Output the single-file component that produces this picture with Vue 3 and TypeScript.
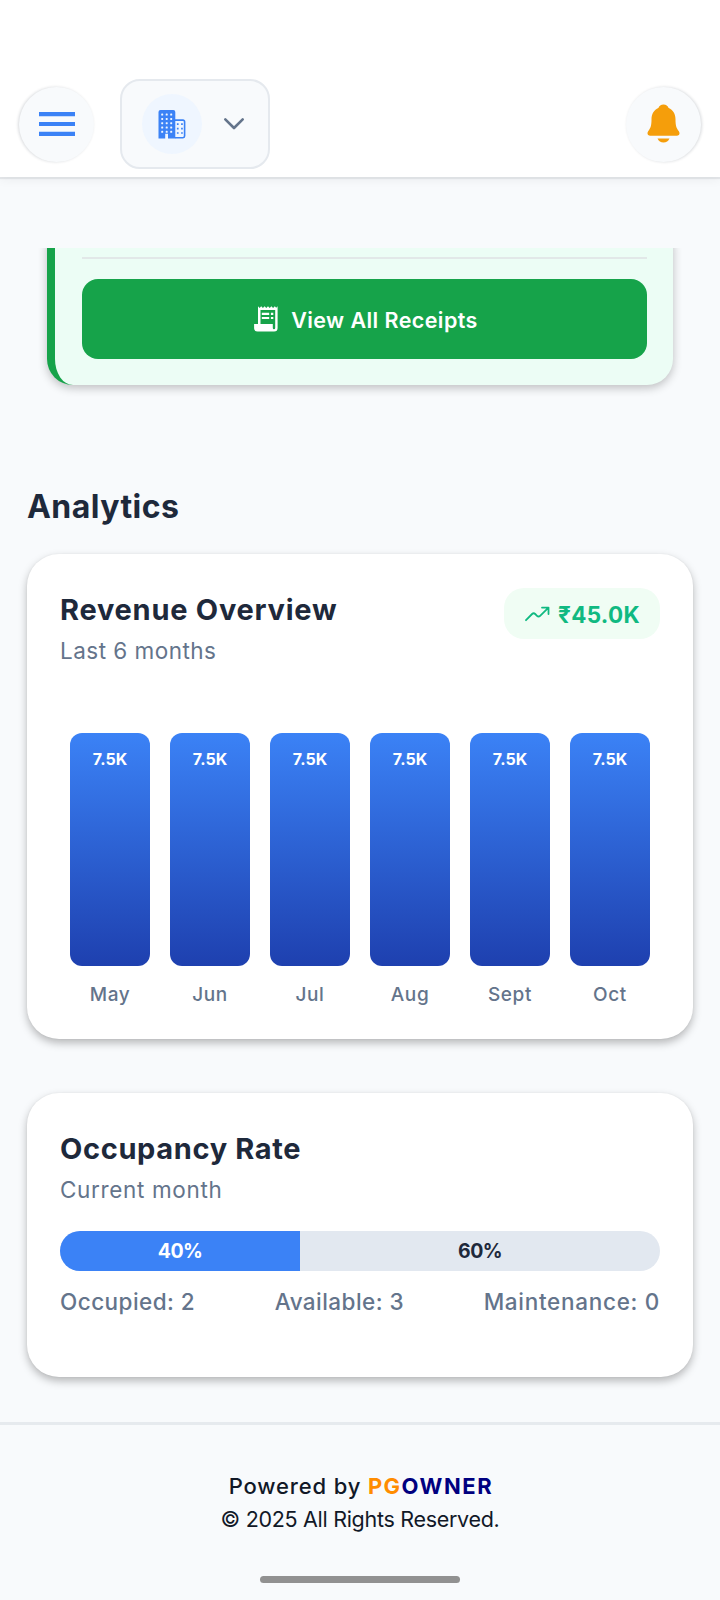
<script setup lang="ts">
interface Bar {
  month: string
  value: string
  amount: number
}

const bars: Bar[] = ['May', 'Jun', 'Jul', 'Aug', 'Sept', 'Oct'].map((month) => ({
  month,
  value: '7.5K',
  amount: 7500,
}))
const maxAmount = Math.max(...bars.map((b) => b.amount))
const barHeight = (b: Bar) => ({ height: `${(b.amount / maxAmount) * 100}%` })

const occupied = 40
const windows: [number, number][] = [0, 1, 2, 3, 4].flatMap((row) =>
  [0, 1, 2].map((col) => [col, row] as [number, number]),
)
</script>

<template>
  <div class="screen">
    <header class="topbar">
      <button class="round menu" aria-label="Menu">
        <svg width="36" height="25" viewBox="0 0 36 25" fill="#3b82f6">
          <path d="M0 0h36v4.2H0zM0 9.9h36v4.2H0zM0 19.8h36v4.2H0z" />
        </svg>
      </button>
      <button class="selector" aria-label="Select property">
        <span class="selector-icon">
          <svg width="28" height="29" viewBox="0 0 28 29">
            <path fill="#3b82f6" d="M2.5 0h12.8a2 2 0 0 1 2 2v26.500H10v-4.800H7.200v4.800H.5V2a2 2 0 0 1 2-2z" />
            <path fill="none" stroke="#3b82f6" stroke-width="1.6" d="M17 10.100h8a1.600 1.600 0 0 1 1.600 1.600v14.400a1.600 1.600 0 0 1-1.600 1.600H17" />
            <g fill="#eff6ff">
              <rect v-for="[c, r] in windows" :key="`${c}-${r}`" :x="3.2 + c * 4.5" :y="3.600 + r * 4.300" width="2" height="2" rx=".6" />
            </g>
            <path stroke="#3b82f6" stroke-width="1.700" stroke-dasharray="1.700 2.500" fill="none" d="M18.900 14.200H26.500M18.900 18.600H26.500M18.900 23H26.500" />
          </svg>
        </span>
        <svg width="22" height="14" viewBox="0 0 22 14" fill="none" stroke="#64748b" stroke-width="2.600" stroke-linecap="round" stroke-linejoin="round">
          <path d="M2.300 2.300 11 11l8.700-8.700" />
        </svg>
      </button>
      <button class="round bell" aria-label="Notifications">
        <svg width="33" height="39" viewBox="0 0 33 39" fill="#f59e0b">
          <path d="M16.500.4c2.600 0 4.300 1.400 5.100 3.500 4.300 1.900 6.900 5.900 6.900 11.300 0 6.400.9 8.700 3.200 11.800 1.700 2.300.6 4.800-1.900 4.800H3.200c-2.500 0-3.600-2.500-1.900-4.800 2.300-3.100 3.200-5.400 3.200-11.800 0-5.400 2.600-9.400 6.900-11.300.8-2.100 2.500-3.500 5.100-3.500z" />
          <path d="M10.500 34.400h12c-1.100 2.600-3.200 4-6 4s-4.900-1.400-6-4z" />
        </svg>
      </button>
    </header>

    <main class="content">
      <section class="receipts">
        <div class="receipts-card">
          <hr class="divider" />
          <button class="receipts-btn">
            <svg width="24" height="26" viewBox="0 0 24 26">
              <path fill="#fff" d="M4 .2 5.600 1.900 7.200.2l1.700 1.700L10.600.2l1.700 1.700L14 .2l1.700 1.700L17.400.2l1.700 1.700L20.800.2l1.400 1.500L23.600.2V22a3.500 3.500 0 0 1-3.500 3.500H3.500A3.400 3.400 0 0 1 .1 22v-3.900H4z" />
              <path fill="#16a34a" d="M6.500 4h14.700v18a1.200 1.200 0 0 1-2.400 0v-3.900H6.500z" />
              <path fill="#fff" d="M7.800 6.800h7.400v2.200H7.800zM16.900 6.800h2.400v2.200h-2.400zM7.800 10.900h7.400v2.200H7.800zM16.900 10.900h2.400v2.200h-2.400z" />
            </svg>
            <span>View All Receipts</span>
          </button>
        </div>
      </section>

      <h1 class="section-title">Analytics</h1>

      <section class="card revenue">
        <div class="card-head">
          <div>
            <h2>Revenue Overview</h2>
            <p class="subtitle last">Last 6 months</p>
          </div>
          <div class="badge">
            <svg width="25" height="16" viewBox="0 0 25 16" fill="none" stroke="#10b981" stroke-width="1.800" stroke-linecap="round" stroke-linejoin="round">
              <path d="M1 14.200 7.100 8a2.200 2.200 0 0 1 3.100 0l1.800 1.800a2.200 2.200 0 0 0 3.100 0L23.500 1.600M17 1.600h6.500v6.500" />
            </svg>
            <span>₹45.0K</span>
          </div>
        </div>
        <div class="chart">
          <div v-for="b in bars" :key="b.month" class="col">
            <div class="track">
              <div class="bar" :style="barHeight(b)">{{ b.value }}</div>
            </div>
            <span class="month">{{ b.month }}</span>
          </div>
        </div>
      </section>

      <section class="card occupancy">
        <h2 class="occ-title">Occupancy Rate</h2>
        <p class="subtitle current">Current month</p>
        <div class="meter">
          <div class="fill" :style="{ width: `${occupied}%` }">{{ occupied }}%</div>
          <div class="rest">{{ 100 - occupied }}%</div>
        </div>
        <div class="stats">
          <span>Occupied: 2</span>
          <span>Available: 3</span>
          <span class="maint">Maintenance: 0</span>
        </div>
      </section>
    </main>

    <footer class="footer">
      <p class="powered">Powered by <b class="pg">PG</b><b class="owner">OWNER</b></p>
      <p class="rights">© 2025 All Rights Reserved.</p>
      <div class="home-indicator"></div>
    </footer>
  </div>
</template>

<style>
body {
  margin: 0;
  background: #f8fafc;
}
</style>

<style scoped>
.screen {
  width: 720px;
  height: 1600px;
  overflow: hidden;
  display: flex;
  flex-direction: column;
  background: #f8fafc;
  color: #1e293b;
  font-family: Inter, 'Open Sans', sans-serif;
}
h1, h2, p { margin: 0; }
button {
  margin: 0;
  padding: 0;
  border: 0;
  font: inherit;
  display: flex;
  align-items: center;
  justify-content: center;
}
svg { display: block; flex: none; }

.topbar {
  box-sizing: border-box;
  flex: none;
  height: 177px;
  padding: 79px 19px 0;
  display: flex;
  align-items: flex-start;
  background: #fff;
  box-shadow: 0 2px 1px rgba(15, 23, 42, 0.08), 0 3px 10px rgba(15, 23, 42, 0.05);
}
.round {
  width: 75px;
  height: 75px;
  margin-top: 8px;
  border-radius: 50%;
  background: #f8fafc;
}
.menu { box-shadow: -1px 0 3px rgba(15, 23, 42, 0.16); }
.bell {
  margin-left: auto;
  box-shadow: 1px 0 3px rgba(15, 23, 42, 0.16);
}
.bell svg { margin: 0 1px 2px 0; }
.selector {
  box-sizing: border-box;
  width: 150px;
  height: 90px;
  margin-left: 26px;
  padding-right: 4px;
  gap: 21px;
  border: 2px solid #e5e9ee;
  border-radius: 20px;
  background: #f8fafc;
}
.selector-icon {
  width: 60px;
  height: 60px;
  border-radius: 50%;
  display: flex;
  align-items: center;
  justify-content: center;
  background: #eff6ff;
}

.content {
  flex: none;
  height: 1245px;
  padding: 71px 27px 0;
  box-sizing: border-box;
}
.receipts {
  height: 160px;
  margin: 0 -27px;
  padding: 0 47px;
  overflow: hidden;
}
.receipts-card {
  box-sizing: border-box;
  height: 166px;
  margin-top: -29px;
  padding: 38px 26px 0 27px;
  border-left: 8px solid #16a34a;
  border-radius: 26px;
  background: #ecfdf5;
  box-shadow: 0 3px 10px rgba(0, 0, 0, 0.24);
}
.divider {
  margin: 0;
  border: 0;
  height: 2px;
  background: #e2e8e8;
}
.receipts-btn {
  width: 100%;
  height: 80px;
  margin-top: 20px;
  gap: 13px;
  border-radius: 16px;
  background: #16a34a;
  color: #fff;
  font-size: 21.500px;
  font-weight: 600;
  letter-spacing: 0.43px;
}
.receipts-btn svg { margin: 0 0 1px 3px; }
.receipts-btn span { padding-top: 2px; }
.section-title {
  margin-top: 79px;
  font-size: 32px;
  font-weight: 700;
  line-height: 40px;
  letter-spacing: 0.45px;
}

.card {
  box-sizing: border-box;
  border-radius: 32px;
  background: #fff;
  box-shadow: 0 4px 8px rgba(0, 0, 0, 0.27), 0 0 2px rgba(0, 0, 0, 0.06);
}
.revenue {
  height: 485px;
  margin-top: 27px;
  padding: 34px 33px 0;
}
.card-head {
  display: flex;
  justify-content: space-between;
  align-items: flex-start;
  height: 145px;
}
h2 {
  padding-top: 4px;
  font-size: 29px;
  font-weight: 700;
  line-height: 36px;
  letter-spacing: 0.75px;
}
.subtitle {
  margin-top: 9px;
  color: #64748b;
  font-size: 22.500px;
  line-height: 28px;
}
.last { letter-spacing: 0.47px; }
.badge {
  box-sizing: border-box;
  width: 156px;
  height: 51px;
  padding-left: 21px;
  display: flex;
  align-items: center;
  gap: 8px;
  border-radius: 20px;
  background: #f0fdf4;
  color: #10b981;
  font-size: 22.500px;
  font-weight: 700;
  letter-spacing: 0.3px;
}
.badge span { padding-top: 1px; }
.chart {
  display: flex;
  justify-content: space-between;
  padding: 0 10px;
}
.col {
  width: 80px;
  display: flex;
  flex-direction: column;
  align-items: center;
}
.track {
  width: 100%;
  height: 233px;
  display: flex;
  align-items: flex-end;
}
.bar {
  box-sizing: border-box;
  width: 100%;
  padding-top: 16px;
  border-radius: 12px;
  background: linear-gradient(#3b82f6, #1e40af);
  color: #fff;
  font-size: 16px;
  font-weight: 700;
  line-height: 20px;
  text-align: center;
}
.month {
  margin-top: 17px;
  color: #64748b;
  font-size: 19px;
  font-weight: 500;
  line-height: 24px;
  letter-spacing: 0.650px;
}

.occupancy {
  height: 284px;
  margin-top: 54px;
  padding: 34px 33px 0;
}
.occ-title { letter-spacing: 0.64px; }
.current { letter-spacing: 0.650px; }
.meter {
  height: 40px;
  margin-top: 27px;
  display: flex;
  overflow: hidden;
  border-radius: 20px;
  background: #e2e8f0;
  font-size: 19.500px;
  font-weight: 700;
  line-height: 41px;
  letter-spacing: -0.6px;
  text-align: center;
}
.fill { background: #3b82f6; color: #fff; }
.rest { flex: 1; }
.stats {
  margin-top: 17px;
  display: flex;
  justify-content: space-between;
  color: #64748b;
  font-size: 22.500px;
  font-weight: 500;
  line-height: 28px;
  letter-spacing: 0.450px;
}
.maint { letter-spacing: 0.7px; }

.footer {
  flex: 1;
  border-top: 3px solid #e6eaee;
  display: flex;
  flex-direction: column;
  align-items: center;
  color: #111827;
}
.powered {
  margin-top: 47px;
  padding-left: 2px;
  font-size: 22px;
  font-weight: 500;
  line-height: 28px;
  letter-spacing: 0.850px;
}
.pg { color: #ff8c00; font-weight: 700; letter-spacing: 1.400px; }
.owner { color: #000080; font-weight: 700; letter-spacing: 1.600px; }
.rights {
  margin-top: 5px;
  font-size: 21.500px;
  line-height: 28px;
  letter-spacing: -0.3px;
}
.home-indicator {
  width: 200px;
  height: 7px;
  margin-top: 43px;
  border-radius: 4px;
  background: #919191;
}
</style>
